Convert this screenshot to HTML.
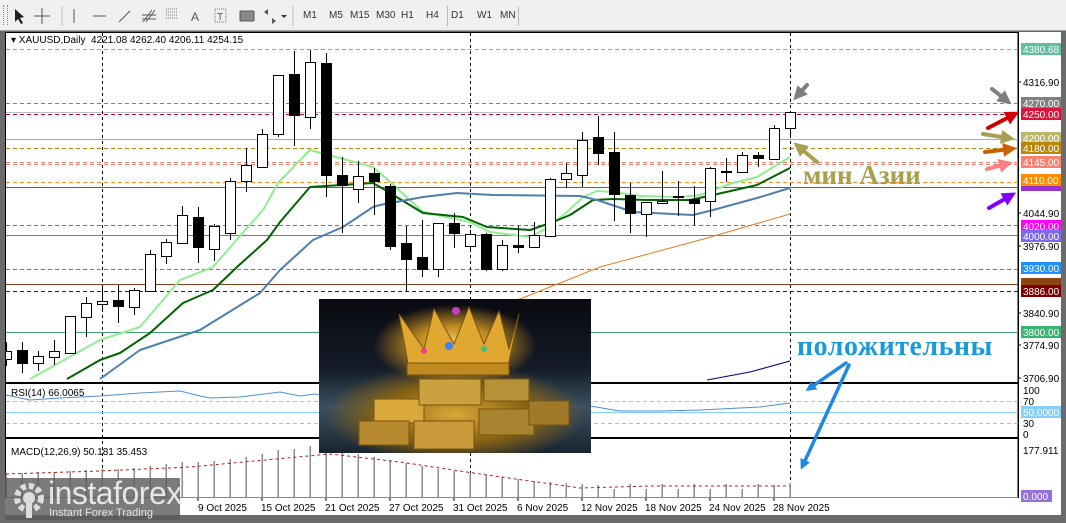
<!DOCTYPE html>
<html><head><meta charset="utf-8"><style>
html,body{margin:0;padding:0;width:1066px;height:523px;overflow:hidden;background:#6b6b6b;font-family:"Liberation Sans",sans-serif}
#tb{position:absolute;left:0;top:0;width:1066px;height:30px;background:#f0f0f0;border-bottom:1px solid #a0a0a0}
#tb span{position:absolute;top:10px;font-size:10px;color:#333}
svg{position:absolute;left:0;top:0}
#img{position:absolute;left:319px;top:299px;width:272px;height:154px;overflow:hidden;
background:radial-gradient(ellipse 40% 35% at 50% 30%,#f5d56a 0%,#c08a20 35%,rgba(60,40,10,0) 75%),radial-gradient(ellipse 60% 40% at 50% 75%,#d9a838 0%,#8a6410 45%,rgba(20,30,40,0) 80%),linear-gradient(180deg,#0a0a10 0%,#141c28 45%,#3a5060 70%,#1a2430 100%)}
</style></head><body>
<div id="tb">
<div style="position:absolute;left:3px;top:5px;width:3px;height:20px;border-left:1px dotted #888;border-right:1px dotted #888"></div>
<svg width="300" height="30" style="left:0;top:0">
<path d="M15 9 L15 22 L18 19 L21 24 L23 23 L20 18 L24 17 Z" fill="#222"/>
<path d="M42 8 V24 M34 16 H50" stroke="#555" stroke-width="1"/>
<line x1="62" y1="6" x2="62" y2="26" stroke="#bbb"/>
<line x1="74" y1="9" x2="74" y2="23" stroke="#555"/>
<line x1="93" y1="16" x2="106" y2="16" stroke="#555"/>
<line x1="119" y1="22" x2="130" y2="11" stroke="#555"/>
<path d="M143 22 L152 10 M146 22 L155 10 M142 15 H156 M142 19 H156" stroke="#555"/>
<path d="M166 9 H178 M166 12 H178 M166 15 H178 M166 18 H178" stroke="#777" stroke-dasharray="1 1"/>
<text x="191" y="21" font-size="12" fill="#555" font-family="Liberation Sans">A</text>
<rect x="215" y="9" width="11" height="13" fill="none" stroke="#777" stroke-dasharray="1 1"/>
<text x="217" y="20" font-size="10" fill="#555">T</text>
<rect x="240" y="11" width="14" height="10" rx="1" fill="#888" stroke="#555"/>
<path d="M264 12 L268 9 L268 15 Z M272 18 L276 21 L272 24 Z" fill="#555"/>
<path d="M281 15 L287 15 L284 18 Z" fill="#333"/>
<line x1="293" y1="6" x2="293" y2="26" stroke="#bbb"/>
</svg>
<span style="left:303px">M1</span><span style="left:329px">M5</span><span style="left:350px">M15</span><span style="left:376px">M30</span><span style="left:401px">H1</span><span style="left:426px">H4</span>
<div style="position:absolute;left:447px;top:6px;height:20px;border-left:1px solid #bbb"></div>
<span style="left:451px">D1</span><span style="left:477px">W1</span><span style="left:500px">MN</span>
<div style="position:absolute;left:518px;top:6px;height:20px;border-left:1px solid #bbb"></div>
</div>

<svg width="1066" height="523" style="top:0">
<defs>
<clipPath id="mc"><rect x="6" y="33" width="1012" height="349"/></clipPath>
<marker id="ag" viewBox="0 0 10 10" refX="5" refY="5" markerWidth="3.5" markerHeight="3.5" orient="auto"><path d="M0 0L10 5L0 10z" fill="#808080"/></marker>
<marker id="ar" viewBox="0 0 10 10" refX="5" refY="5" markerWidth="3.5" markerHeight="3.5" orient="auto"><path d="M0 0L10 5L0 10z" fill="#d00000"/></marker>
<marker id="ao" viewBox="0 0 10 10" refX="5" refY="5" markerWidth="3.5" markerHeight="3.5" orient="auto"><path d="M0 0L10 5L0 10z" fill="#a8a050"/></marker>
<marker id="ab" viewBox="0 0 10 10" refX="5" refY="5" markerWidth="3.5" markerHeight="3.5" orient="auto"><path d="M0 0L10 5L0 10z" fill="#cc6000"/></marker>
<marker id="as" viewBox="0 0 10 10" refX="5" refY="5" markerWidth="3.5" markerHeight="3.5" orient="auto"><path d="M0 0L10 5L0 10z" fill="#ff8080"/></marker>
<marker id="ap" viewBox="0 0 10 10" refX="5" refY="5" markerWidth="3.5" markerHeight="3.5" orient="auto"><path d="M0 0L10 5L0 10z" fill="#8000ff"/></marker>
<marker id="abl" viewBox="0 0 10 10" refX="5" refY="5" markerWidth="3" markerHeight="3" orient="auto"><path d="M0 0L10 5L0 10z" fill="#1e88e5"/></marker>
</defs>
<rect x="5" y="32" width="1056" height="483" fill="#fff"/>
<rect x="5.5" y="32.5" width="1012.5" height="465" fill="none" stroke="#000"/>
<line x1="6" y1="383" x2="1018" y2="383" stroke="#000" stroke-width="2"/>
<line x1="6" y1="438" x2="1018" y2="438" stroke="#000" stroke-width="2"/>
<line x1="1018.5" y1="32" x2="1018.5" y2="498" stroke="#000"/>

<g clip-path="url(#mc)" shape-rendering="crispEdges">
<line x1="6" x2="1018" y1="49.5" y2="49.5" stroke="#5fbf9f" stroke-dasharray="4 3"/>
<line x1="6" x2="1018" y1="103.5" y2="103.5" stroke="#808080" stroke-dasharray="4 3"/>
<line x1="6" x2="1018" y1="112.5" y2="112.5" stroke="#c0c0c0"/>
<line x1="6" x2="1018" y1="114.5" y2="114.5" stroke="#c00040" stroke-dasharray="4 3"/>
<line x1="6" x2="1018" y1="139.5" y2="139.5" stroke="#b5b070"/>
<line x1="6" x2="1018" y1="148.5" y2="148.5" stroke="#b8860b" stroke-dasharray="4 3"/>
<line x1="6" x2="1018" y1="162.5" y2="162.5" stroke="#f08070" stroke-dasharray="4 3"/>
<line x1="6" x2="1018" y1="164.5" y2="164.5" stroke="#f08070" stroke-dasharray="4 3"/>
<line x1="6" x2="1018" y1="182.5" y2="182.5" stroke="#ff9020" stroke-dasharray="4 3"/>
<line x1="6" x2="1018" y1="187.5" y2="187.5" stroke="#8040c0"/>
<line x1="6" x2="1018" y1="225.5" y2="225.5" stroke="#c040c0" stroke-dasharray="4 3"/>
<line x1="6" x2="1018" y1="235.5" y2="235.5" stroke="#7070d0"/>
<line x1="6" x2="1018" y1="269.5" y2="269.5" stroke="#3090d0" stroke-dasharray="4 3"/>
<line x1="6" x2="1018" y1="284.5" y2="284.5" stroke="#804020"/>
<line x1="6" x2="1018" y1="291.5" y2="291.5" stroke="#800000" stroke-dasharray="4 3"/>
<line x1="6" x2="1018" y1="332.5" y2="332.5" stroke="#40a070"/>
</g>
<g stroke="#000" stroke-dasharray="3 3">
<line x1="102.5" y1="33" x2="102.5" y2="498"/>
<line x1="470.5" y1="33" x2="470.5" y2="498"/>
<line x1="790.5" y1="33" x2="790.5" y2="498"/>
</g>

<g clip-path="url(#mc)" fill="none" stroke-linejoin="round">
<polyline stroke="#e08020" stroke-width="1" points="330,330 420,315 520,299 600,267 700,240 790,214"/>
<polyline stroke="#000080" stroke-width="1" points="707,380 750,372 790,361"/>
<polyline stroke="#90ee90" stroke-width="2" points="30,379 100,340 140,327 180,280 213,267 247,228 263,210 278,183 310,150 373,167 380,173 423,212 470,222 490,232 530,237 547,228 567,212 583,197 597,191 613,192 640,196 680,197 700,195 733,183 757,177 790,157"/>
<polyline stroke="#006400" stroke-width="2" points="67,379 100,360 120,353 150,333 183,303 213,290 237,267 267,240 280,222 310,187 373,183 380,187 423,213 463,217 487,227 530,230 553,222 570,215 593,200 613,199 647,200 690,200 713,195 757,185 790,168"/>
<polyline stroke="#4f7fae" stroke-width="2" points="100,379 140,350 200,330 260,293 280,270 313,240 343,227 373,207 380,205 423,197 457,193 493,195 580,196 597,200 633,212 673,214 693,215 713,210 757,198 790,188"/>
</g>

<g stroke="#000" shape-rendering="crispEdges" clip-path="url(#mc)">
<path d="M6.5 342V366M22.5 342V373M38.5 351V371M54.5 340V365M70.5 316V354M86.5 297V337M102.5 285V310M118.5 285V323M134.5 288V315M150.5 250V292M166.5 239V264M182.5 206V243M198.5 207V263M214.5 224V261M230.5 178V240M246.5 148V192M262.5 129V168M278.5 75V137M294.5 51V146M310.5 50V129M326.5 53V197M342.5 157V233M358.5 161V203M374.5 168V215M390.5 184V250M406.5 226V291M422.5 220V277M438.5 223V277M454.5 213V248M470.5 230V250M486.5 233V271M502.5 240V271M518.5 226V253M534.5 222V248M550.5 178V237M566.5 163V188M582.5 132V187M598.5 116V165M614.5 132V221M630.5 183V233M646.5 202V237M662.5 171V203M678.5 181V216M694.5 186V225M710.5 167V217M726.5 158V182M742.5 152V173M758.5 152V167M774.5 125V159M790.5 112V138"/>
<g fill="#fff">
<rect x="1.5" y="351.5" width="10" height="8"/><rect x="33.5" y="356.5" width="10" height="7"/><rect x="49.5" y="351.5" width="10" height="6"/><rect x="65.5" y="316.5" width="10" height="37"/><rect x="81.5" y="303.5" width="10" height="14"/><rect x="97.5" y="301.5" width="10" height="3"/><rect x="129.5" y="290.5" width="10" height="17"/><rect x="145.5" y="254.5" width="10" height="37"/><rect x="161.5" y="242.5" width="10" height="14"/><rect x="177.5" y="215.5" width="10" height="28"/><rect x="209.5" y="226.5" width="10" height="23"/><rect x="225.5" y="181.5" width="10" height="52"/><rect x="241.5" y="165.5" width="10" height="16"/><rect x="257.5" y="134.5" width="10" height="33"/><rect x="273.5" y="75.5" width="10" height="59"/><rect x="305.5" y="62.5" width="10" height="55"/><rect x="353.5" y="176.5" width="10" height="13"/><rect x="433.5" y="223.5" width="10" height="46"/><rect x="465.5" y="234.5" width="10" height="12"/><rect x="497.5" y="245.5" width="10" height="24"/><rect x="529.5" y="235.5" width="10" height="12"/><rect x="545.5" y="179.5" width="10" height="57"/><rect x="561.5" y="173.5" width="10" height="6"/><rect x="577.5" y="140.5" width="10" height="35"/><rect x="641.5" y="202.5" width="10" height="12"/><rect x="657.5" y="201.5" width="10" height="2"/><rect x="705.5" y="168.5" width="10" height="33"/><rect x="737.5" y="155.5" width="10" height="17"/><rect x="769.5" y="128.5" width="10" height="31"/><rect x="785.5" y="112.5" width="10" height="16"/>
</g>
<g fill="#000">
<rect x="17.5" y="350.5" width="10" height="13"/><rect x="113.5" y="300.5" width="10" height="6"/><rect x="193.5" y="217.5" width="10" height="30"/><rect x="289.5" y="74.5" width="10" height="41"/><rect x="321.5" y="63.5" width="10" height="112"/><rect x="337.5" y="175.5" width="10" height="10"/><rect x="369.5" y="173.5" width="10" height="8"/><rect x="385.5" y="186.5" width="10" height="60"/><rect x="401.5" y="243.5" width="10" height="16"/><rect x="417.5" y="257.5" width="10" height="12"/><rect x="449.5" y="223.5" width="10" height="10"/><rect x="481.5" y="234.5" width="10" height="35"/><rect x="513.5" y="245.5" width="10" height="2"/><rect x="593.5" y="137.5" width="10" height="16"/><rect x="609.5" y="152.5" width="10" height="42"/><rect x="625.5" y="195.5" width="10" height="18"/><rect x="673.5" y="196.5" width="10" height="1"/><rect x="689.5" y="199.5" width="10" height="4"/><rect x="721.5" y="171.5" width="10" height="1"/><rect x="753.5" y="155.5" width="10" height="3"/>
</g>
</g>

<g shape-rendering="crispEdges">
<line x1="6" x2="1018" y1="401.5" y2="401.5" stroke="#c0c0c0" stroke-dasharray="4 3"/>
<line x1="6" x2="1018" y1="412.5" y2="412.5" stroke="#87cefa"/>
<line x1="6" x2="1018" y1="423.5" y2="423.5" stroke="#c0c0c0" stroke-dasharray="4 3"/>
</g>
<polyline fill="none" stroke="#4f8fcf" stroke-width="1" points="6,395 30,400 60,398 100,396 140,393 180,391 200,396 210,398 240,397 280,392 300,396 315,394 330,396 400,399 500,402 590,406 620,411 660,411 700,410 760,407 790,403"/>
<text x="11" y="396" font-size="10" fill="#000">RSI(14) 66.0065</text>

<line x1="6" x2="1018" y1="497.5" y2="497.5" stroke="#9370db"/>
<g stroke="#8c8c8c" stroke-width="1.5" shape-rendering="crispEdges">
<path d="M6 497V473M22 497V473M38 497V472M54 497V472M70 497V471M86 497V470M102 497V469M118 497V469M134 497V468M150 497V466M166 497V464M182 497V462M198 497V462M214 497V461M230 497V459M246 497V457M262 497V454M278 497V450M294 497V449M310 497V446M326 497V448M342 497V452M358 497V454M374 497V457M390 497V460M406 497V463M422 497V466M438 497V469M454 497V471M470 497V473M486 497V475M502 497V477M518 497V479M534 497V481M550 497V482M566 497V483M582 497V484M598 497V485M614 497V489M630 497V484M646 497V489M662 497V484M678 497V489M694 497V484M710 497V489M726 497V484M742 497V489M758 497V484M774 497V485M790 497V483"/>
</g>
<polyline fill="none" stroke="#b22222" stroke-dasharray="3 3" points="6,474 100,471 190,467 265,460 330,454 400,462 480,474 580,488 650,486 790,486"/>
<text x="11" y="455" font-size="10" fill="#000">MACD(12,26,9) 50.181 35.453</text>

<g font-size="10" fill="#000">
<text x="198" y="511">9 Oct 2025</text><text x="261" y="511">15 Oct 2025</text><text x="325" y="511">21 Oct 2025</text><text x="389" y="511">27 Oct 2025</text><text x="453" y="511">31 Oct 2025</text><text x="517" y="511">6 Nov 2025</text><text x="581" y="511">12 Nov 2025</text><text x="645" y="511">18 Nov 2025</text><text x="709" y="511">24 Nov 2025</text><text x="773" y="511">28 Nov 2025</text>
</g>
<g stroke="#000"><path d="M198 498v3M262 498v3M326 498v3M390 498v3M454 498v3M518 498v3M582 498v3M646 498v3M710 498v3M774 498v3"/></g>

<g font-size="10" fill="#000">
<text x="1023" y="86">4316.90</text><text x="1023" y="217">4044.90</text><text x="1023" y="250">3976.90</text><text x="1023" y="317">3840.90</text><text x="1023" y="349">3774.90</text><text x="1023" y="382">3706.90</text>
<text x="1023" y="394">100</text><text x="1023" y="405">70</text><text x="1023" y="427">30</text><text x="1023" y="438">0</text><text x="1023" y="454">177.911</text>
</g>
<g stroke="#000"><path d="M1018 82h3M1018 213h3M1018 246h3M1018 313h3M1018 345h3M1018 378h3"/></g>
<g font-size="10" fill="#fff">
<rect x="1021" y="43" width="40" height="12" fill="#5fbf9f"/><text x="1023" y="53">4380.68</text>
<rect x="1021" y="97" width="40" height="12" fill="#808080"/><text x="1023" y="107">4270.00</text>
<rect x="1021" y="108" width="40" height="12" fill="#dc143c"/><text x="1023" y="118">4250.00</text>
<rect x="1021" y="132" width="40" height="12" fill="#bdb76b"/><text x="1023" y="142">4200.00</text>
<rect x="1021" y="142" width="40" height="12" fill="#b8860b"/><text x="1023" y="152">4180.00</text>
<rect x="1021" y="156" width="40" height="12" fill="#fa8072"/><text x="1023" y="166">4145.00</text>
<rect x="1021" y="181" width="40" height="10" fill="#9932cc"/>
<rect x="1021" y="174" width="40" height="12" fill="#ff8c00"/><text x="1023" y="184">4110.00</text>
<rect x="1021" y="220" width="40" height="12" fill="#ff00ff"/><text x="1023" y="230">4020.00</text>
<rect x="1021" y="230" width="40" height="12" fill="#7b68ee"/><text x="1023" y="240">4000.00</text>
<rect x="1021" y="262" width="40" height="12" fill="#1e90ff"/><text x="1023" y="272">3930.00</text>
<rect x="1021" y="278" width="40" height="9" fill="#8b4513"/>
<rect x="1021" y="285" width="40" height="12" fill="#800000"/><text x="1023" y="295">3886.00</text>
<rect x="1021" y="326" width="40" height="12" fill="#3cb371"/><text x="1023" y="336">3800.00</text>
<rect x="1021" y="406" width="40" height="12" fill="#87cefa"/><text x="1023" y="416">50.0000</text>
<rect x="1021" y="490" width="31" height="12" fill="#9370db"/><text x="1023" y="500">0.000</text>
</g>

<g stroke-width="4" stroke-linecap="round" fill="none">
<line x1="807" y1="85" x2="798" y2="95" stroke="#808080" marker-end="url(#ag)"/>
<line x1="817" y1="162" x2="799" y2="147" stroke="#a8a050" marker-end="url(#ao)"/>
<line x1="992" y1="89" x2="1006" y2="100" stroke="#808080" marker-end="url(#ag)"/>
<line x1="988" y1="128" x2="1013" y2="115" stroke="#d00000" marker-end="url(#ar)"/>
<line x1="983" y1="134" x2="1008" y2="138" stroke="#a8a050" marker-end="url(#ao)"/>
<line x1="985" y1="152" x2="1010" y2="149" stroke="#cc6000" marker-end="url(#ab)"/>
<line x1="987" y1="169" x2="1006" y2="164" stroke="#ff8080" marker-end="url(#as)"/>
<line x1="989" y1="208" x2="1010" y2="196" stroke="#8000ff" marker-end="url(#ap)"/>
<line x1="846" y1="363" x2="810" y2="388" stroke="#1e88e5" stroke-width="3.5" marker-end="url(#abl)"/>
<line x1="849" y1="365" x2="803" y2="465" stroke="#1e88e5" stroke-width="3.5" marker-end="url(#abl)"/>
</g>
<text x="803" y="184" font-family="Liberation Serif,serif" font-weight="bold" font-size="27" fill="#a8a050">мин Азии</text>
<text x="797" y="355" font-family="Liberation Serif,serif" font-weight="bold" font-size="28" letter-spacing="0.5" fill="#1a9ad8">положительны</text>
</svg>

<div id="img">
<svg width="272" height="154" style="position:absolute;left:0;top:0">
<g fill="#e8b040" stroke="#7a5410" stroke-width="1">
<path d="M90 70 L80 15 L105 50 L115 10 L135 45 L150 8 L165 45 L180 12 L190 50 L200 15 L188 72 Z" fill="#e0a830"/>
<rect x="88" y="64" width="102" height="12" fill="#c08a20"/>
<rect x="55" y="100" width="50" height="24" fill="#d9a83a"/>
<rect x="100" y="80" width="62" height="26" fill="#caa040"/>
<rect x="165" y="80" width="45" height="22" fill="#b89038"/>
<rect x="95" y="122" width="60" height="28" fill="#c89a3a"/>
<rect x="160" y="110" width="55" height="26" fill="#a88430"/>
<rect x="40" y="122" width="50" height="24" fill="#b88a30"/>
<rect x="210" y="102" width="40" height="24" fill="#a07a28"/>
</g>
<g fill="#f04080"><circle cx="130" cy="47" r="4" fill="#4080f0"/><circle cx="105" cy="52" r="3"/><circle cx="165" cy="50" r="3" fill="#40c080"/><circle cx="137" cy="12" r="4" fill="#c040c0"/></g>
</svg>
</div>

<div style="position:absolute;left:5px;top:478px;width:175px;height:42px;background:rgba(90,90,90,0.8)">
<svg width="40" height="40" style="left:4px;top:2px">
<circle cx="20" cy="18" r="12" fill="none" stroke="#ddd" stroke-width="6" stroke-dasharray="5 3"/>
<circle cx="20" cy="18" r="6" fill="#ddd"/>
<rect x="17" y="20" width="6" height="18" fill="#ddd"/>
</svg>
<div style="position:absolute;left:43px;top:-3px;font-size:32px;color:#e6e6e6;letter-spacing:-0.5px">instaforex</div>
<div style="position:absolute;left:44px;top:29px;font-size:11px;color:#e6e6e6">Instant Forex Trading</div>
</div>

<div style="position:absolute;left:11px;top:35px;font-size:10px;color:#000">▾ XAUUSD,Daily&nbsp; 4221.08 4262.40 4206.11 4254.15</div>
</body></html>
